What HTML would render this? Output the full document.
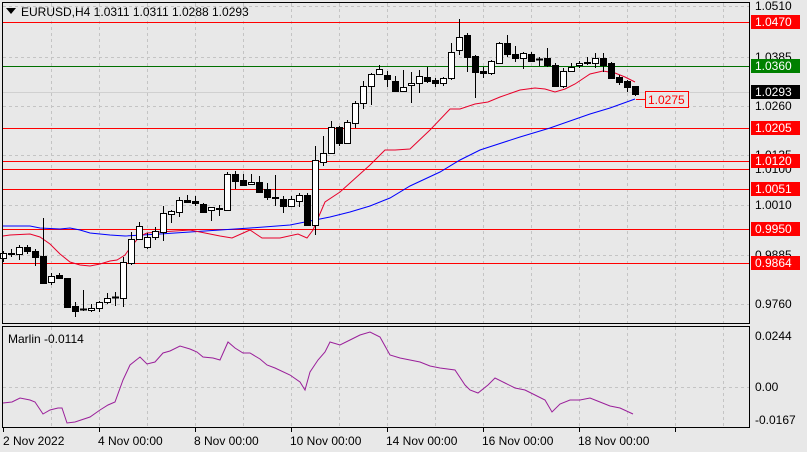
<!DOCTYPE html>
<html><head><meta charset="utf-8"><style>
html,body{margin:0;padding:0;background:#e8e8e8;}
body{width:807px;height:452px;overflow:hidden;position:relative;font-family:"Liberation Sans",sans-serif;}
svg{position:absolute;left:0;top:0;}
</style></head><body>
<svg id="s" width="807" height="452" xmlns="http://www.w3.org/2000/svg" font-family="Liberation Sans, sans-serif" font-size="12">
<rect width="807" height="452" fill="#e8e8e8"/>
<g id="grid" stroke="#c4c4c4" stroke-dasharray="3,3" stroke-width="1"></g>
<g id="hl"></g>
<g id="ma"></g>
<g id="cd"></g>
<rect x="2.5" y="2.5" width="747" height="321" fill="none" stroke="#000"/>
<rect x="2.5" y="326.5" width="747" height="101" fill="none" stroke="#000"/>
<polygon points="6,8 16,8 11,14" fill="#000"/>
<text x="21" y="16" fill="#000">EURUSD,H4  1.0311 1.0311 1.0288 1.0293</text>
<text x="8" y="343" fill="#000">Marlin -0.0114</text>
<g fill="#000">
<text x="755" y="10">1.0510</text>
<text x="755" y="61">1.0385</text>
<text x="755" y="110">1.0260</text>
<text x="755" y="159">1.0135</text>
<text x="755" y="173">1.0100</text>
<text x="755" y="209">1.0010</text>
<text x="755" y="259">0.9885</text>
<text x="755" y="308">0.9760</text>
<text x="755" y="340">0.0244</text>
<text x="755" y="391">0.00</text>
<text x="755" y="424">-0.0167</text>
</g>
<g id="lbl"></g>
<rect x="645.5" y="91.5" width="43" height="16" fill="#e8e8e8" stroke="#f00"/>
<text x="648" y="104" fill="#f00">1.0275</text>
<line x1="636" y1="99.5" x2="645" y2="99.5" stroke="#f00"/>
<g fill="#000">
<text x="3" y="445">2 Nov 2022</text>
<text x="98" y="445">4 Nov 00:00</text>
<text x="194" y="445">8 Nov 00:00</text>
<text x="290" y="445">10 Nov 00:00</text>
<text x="386" y="445">14 Nov 00:00</text>
<text x="482" y="445">16 Nov 00:00</text>
<text x="578" y="445">18 Nov 00:00</text>
</g>
<g id="ind"></g>
</svg>
<script>
var NS="http://www.w3.org/2000/svg";
function el(p,t,a){var e=document.createElementNS(NS,t);for(var k in a)e.setAttribute(k,a[k]);document.getElementById(p).appendChild(e);return e;}
for(var x=51;x<749;x+=48){el('grid','line',{x1:x+.5,y1:3,x2:x+.5,y2:323});el('grid','line',{x1:x+.5,y1:327,x2:x+.5,y2:427});}
[6,57,106,155,205,255,304].forEach(function(y){el('grid','line',{x1:3,y1:y+.5,x2:749,y2:y+.5});});
el('grid','line',{x1:3,y1:387.5,x2:749,y2:387.5});
for(var x=3;x<749;x+=96){el('grid','line',{x1:x+.5,y1:428,x2:x+.5,y2:432,stroke:'#000','stroke-dasharray':'none'});}
[[22,'#f00'],[128,'#f00'],[161,'#f00'],[169,'#f00'],[189,'#f00'],[229,'#f00'],[263,'#f00'],[66,'#007000'],[92,'#d0d0d0']].forEach(function(h){el('hl','line',{x1:3,y1:h[0]+.5,x2:749,y2:h[0]+.5,stroke:h[1],'stroke-width':1});});
[[22,'1.0470','#f00'],[66,'1.0360','#008000'],[92,'1.0293','#000'],[128,'1.0205','#f00'],[161,'1.0120','#f00'],[189,'1.0051','#f00'],[229,'0.9950','#f00'],[263,'0.9864','#f00']].forEach(function(l){
el('lbl','rect',{x:751,y:l[0]-7,width:49,height:14,fill:l[2]});
var t=el('lbl','text',{x:755,y:l[0]+4,fill:'#fff'});t.textContent=l[1];});
function pl(g,pts,c){el(g,'polyline',{points:pts.map(function(p){return p.join(',')}).join(' '),fill:'none',stroke:c,'stroke-width':1});}
pl('ma',[[3,226],[30,226],[40,228],[60,229],[70,228],[80,230],[90,233],[110,235],[125,236],[160,234],[190,232],[220,230],[250,228],[290,225],[310,221],[330,217],[350,212],[370,206],[390,198],[410,186],[440,172],[460,160],[480,150],[520,137],[550,128],[590,114],[610,108],[635,99]],'#0000ff');
pl('ma',[[3,236],[10,235],[30,234],[40,237],[50,244],[60,254],[70,262],[80,265],[90,266],[100,264],[110,261],[117,260],[125,255],[130,248],[140,236],[147,233],[160,232],[190,230],[220,236],[232,238],[250,230],[262,238],[280,238],[298,234],[307,238],[313,230],[325,202],[340,192],[370,165],[385,150],[395,150],[410,149],[430,130],[450,109],[460,109],[475,104],[488,102],[500,97],[520,90],[535,88],[545,89],[555,92],[565,89],[575,84],[590,74],[603,71],[615,73],[625,77],[635,82]],'#e8002a');
var C=[[258,253,251,262],[254,253,249,257],[254,247,245,260],[247,251,245,254],[251,257,249,266],[256,283,218,284],[282,276,273,285],[275,278,273,279],[278,307,278,308],[306,311,302,317],[309,309,290,311],[310,308,304,312],[308,302,301,312],[302,298,293,304],[297,297,292,306],[298,262,257,307],[263,239,232,265],[239,226,222,240],[247,237,233,249],[237,231,227,240],[232,213,206,241],[214,211,210,223],[212,200,197,217],[200,202,195,203],[201,203,196,206],[204,212,203,212],[210,207,207,221],[209,208,205,216],[210,174,172,211],[174,181,171,189],[180,185,174,185],[184,182,174,185],[182,192,176,193],[189,197,183,200],[197,198,175,206],[199,206,196,213],[206,199,196,207],[201,195,193,207],[195,225,193,226],[225,160,146,235],[162,153,136,166],[153,127,121,153],[127,143,126,146],[143,122,120,144],[123,103,101,128],[103,86,81,109],[86,74,73,105],[74,69,65,75],[75,79,71,87],[81,91,76,91],[91,87,70,91],[85,83,72,103],[83,76,70,93],[77,81,67,83],[80,83,78,87],[83,78,77,86],[78,52,43,80],[50,37,19,55],[35,57,33,72],[56,72,55,98],[71,73,67,78],[73,61,60,75],[63,43,42,64],[43,54,35,57],[54,58,46,62],[58,53,52,69],[54,61,52,62],[59,59,57,66],[58,65,48,67],[65,86,63,87],[86,71,68,88],[71,67,63,72],[65,63,61,68],[63,62,57,65],[63,58,53,68],[58,65,53,72],[63,78,62,78],[77,82,75,85],[81,87,80,92],[86,94,86,96]];
C.forEach(function(c,i){var x=Math.round(3.3+8*i);var bull=c[1]<c[0];var t=Math.min(c[0],c[1]),b=Math.max(c[0],c[1]);
el('cd','line',{x1:x+.5,y1:c[2],x2:x+.5,y2:c[3],stroke:'#000'});
if(b-t<1){el('cd','line',{x1:x-3,y1:t+.5,x2:x+4,y2:t+.5,stroke:'#000','stroke-width':2});}
else el('cd','rect',{x:x-2.5,y:t+.5,width:6,height:b-t,fill:bull?'#fff':'#000',stroke:'#000'});});
pl('ind',[[3,403],[12,402],[20,398],[30,400],[35,402],[43,414],[50,410],[58,408],[62,408],[67,423],[75,422],[90,417],[100,410],[108,405],[115,402],[123,380],[130,365],[140,357],[147,364],[155,362],[163,353],[170,351],[180,346],[190,349],[197,352],[203,357],[213,358],[220,360],[228,342],[235,348],[243,353],[250,353],[260,359],[267,365],[275,368],[290,375],[300,382],[305,390],[310,372],[318,360],[325,352],[330,342],[340,345],[350,340],[360,335],[370,332],[380,337],[390,355],[400,358],[410,360],[420,362],[430,366],[440,368],[455,370],[465,385],[470,390],[478,393],[488,385],[495,378],[505,383],[515,388],[525,390],[535,395],[545,400],[552,412],[560,404],[570,400],[580,400],[590,398],[600,402],[610,406],[620,408],[633,414]],'#9a1f9a');
</script>
</body></html>
